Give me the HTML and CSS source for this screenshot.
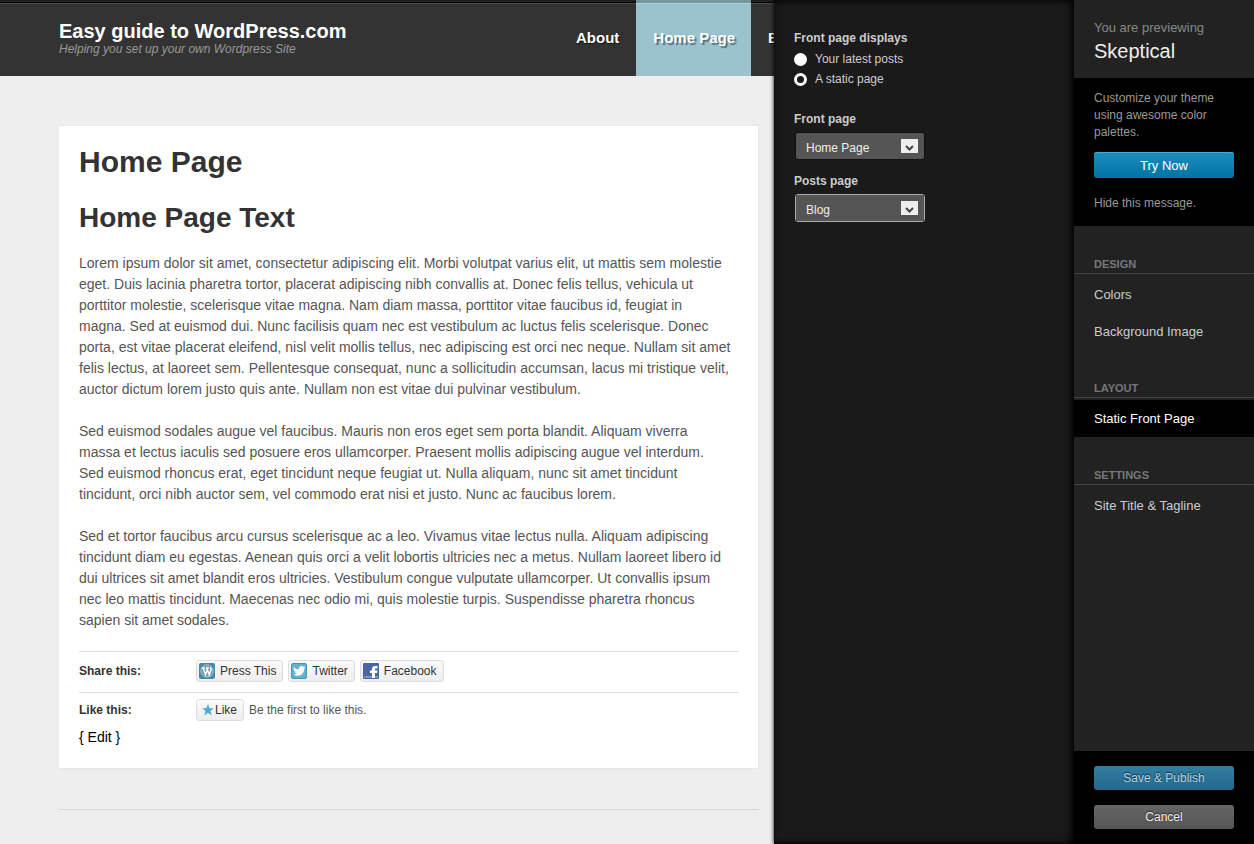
FILE: index.html
```html
<!DOCTYPE html>
<html lang="en">
<head>
<meta charset="utf-8">
<title>Customize Skeptical</title>
<link rel="stylesheet" href="styles.css">
</head>
<body>
<div class="customizer">
  <div class="preview">
    <header class="site-header">
      <div class="brand">
        <a class="site-title" href="#">Easy guide to WordPress.com</a>
        <p class="tagline">Helping you set up your own Wordpress Site</p>
      </div>
      <nav class="site-nav">
        <a href="#">About</a>
        <a href="#" class="current">Home Page</a>
        <a href="#">Blog</a>
      </nav>
    </header>
    <main class="content">
      <article class="post">
        <h1>Home Page</h1>
        <h2>Home Page Text</h2>
        <p>Lorem ipsum dolor sit amet, consectetur adipiscing elit. Morbi volutpat varius elit, ut mattis sem molestie eget. Duis lacinia pharetra tortor, placerat adipiscing nibh convallis at. Donec felis tellus, vehicula ut porttitor molestie, scelerisque vitae magna. Nam diam massa, porttitor vitae faucibus id, feugiat in<br> magna. Sed at euismod dui. Nunc facilisis quam nec est vestibulum ac luctus felis scelerisque. Donec<br> porta, est vitae placerat eleifend, nisl velit mollis tellus, nec adipiscing est orci nec neque. Nullam sit amet felis lectus, at laoreet sem. Pellentesque consequat, nunc a sollicitudin accumsan, lacus mi tristique velit, auctor dictum lorem justo quis ante. Nullam non est vitae dui pulvinar vestibulum.</p>
        <p>Sed euismod sodales augue vel faucibus. Mauris non eros eget sem porta blandit. Aliquam viverra<br> massa et lectus iaculis sed posuere eros ullamcorper. Praesent mollis adipiscing augue vel interdum.<br> Sed euismod rhoncus erat, eget tincidunt neque feugiat ut. Nulla aliquam, nunc sit amet tincidunt<br> tincidunt, orci nibh auctor sem, vel commodo erat nisi et justo. Nunc ac faucibus lorem.</p>
        <p>Sed et tortor faucibus arcu cursus scelerisque ac a leo. Vivamus vitae lectus nulla. Aliquam adipiscing tincidunt diam eu egestas. Aenean quis orci a velit lobortis ultricies nec a metus. Nullam laoreet libero id<br> dui ultrices sit amet blandit eros ultricies. Vestibulum congue vulputate ullamcorper. Ut convallis ipsum<br> nec leo mattis tincidunt. Maecenas nec odio mi, quis molestie turpis. Suspendisse pharetra rhoncus<br> sapien sit amet sodales.</p>
        <section class="social">
          <h3>Share this:</h3>
          <a class="chip" href="#">
            <svg width="16" height="16" viewBox="0 0 16 16" aria-hidden="true"><rect width="16" height="16" rx="2" fill="#4a87a3"/><circle cx="8" cy="8" r="6.200" fill="#6b9fb7" stroke="#b9d3df" stroke-width=".8"/><path d="M2.800 5h3M6.800 5h3.200M4.200 5l2.300 6.800L8.300 6.500M7.800 5l2.400 6.800 2-5.600-.9-1.800" fill="none" stroke="#fff" stroke-width="1.400"/></svg>
            Press This</a>
          <a class="chip" href="#">
            <svg width="16" height="16" viewBox="0 0 16 16" aria-hidden="true"><rect x=".5" y=".5" width="15" height="15" rx="1.500" fill="#62b3d0" stroke="#4694b2"/><path d="M2.500 4c1.500 1.700 3.200 2.300 5.400 2.300C7.700 4.200 9 3 10.500 3c.9 0 1.500.3 2 .8l1.500-.6-.8 1.500 1.200-.2-1.200 1.300c0 4.200-2.800 7-6.400 7-1.700 0-3.100-.4-4.300-1.200 1.500 0 2.600-.3 3.500-1.100-1.200-.2-2-.8-2.400-1.800h1.100C3.400 8.200 2.700 7.300 2.700 6l1.100.3C2.600 5.500 2.200 4.800 2.500 4z" fill="#fff"/></svg>
            Twitter</a>
          <a class="chip" href="#">
            <svg width="16" height="16" viewBox="0 0 16 16" aria-hidden="true"><rect width="16" height="16" rx="1" fill="#4b66a5"/><path d="M1 13h14v2H1z" fill="#8093c1"/><path d="M9 15v-5H7V7.500h2V6c0-2 1.200-3 3-3h2.500v2.500H13c-.8 0-1 .3-1 1v1h2.500L14.100 10H12v5z" fill="#fff"/></svg>
            Facebook</a>
        </section>
        <section class="social">
          <h3>Like this:</h3>
          <a class="chip like" href="#">
            <svg width="12" height="12" viewBox="0 0 12 12" aria-hidden="true"><path d="M6 0l1.500 4.200H12L8.400 6.900 9.800 11.500 6 8.800l-3.800 2.700 1.400-4.600L0 4.200h4.500z" fill="#4fa9d3"/></svg>
            Like</a>
          <span class="like-note">Be the first to like this.</span>
        </section>
        <a class="edit" href="#">{ Edit }</a>
      </article>
      <hr class="divider">
    </main>
  </div>

  <form class="panel">
    <fieldset class="choices">
      <legend>Front page displays</legend>
      <label><input type="radio" name="front"> Your latest posts</label>
      <label><input type="radio" name="front" checked> A static page</label>
    </fieldset>
    <label class="field-label" for="front-page">Front page</label>
    <div class="select-box">
      <select id="front-page"><option>Home Page</option></select>
      <svg class="arrow" width="17" height="14" viewBox="0 0 17 14" aria-hidden="true"><path fill="#eee" d="M0 0h17v14H0z"/><path d="M5 7l3.500 3.500L12 7" fill="none" stroke="#444" stroke-width="2"/></svg>
    </div>
    <label class="field-label" for="posts-page">Posts page</label>
    <div class="select-box focused">
      <select id="posts-page"><option>Blog</option></select>
      <svg class="arrow" width="17" height="14" viewBox="0 0 17 14" aria-hidden="true"><path fill="#eee" d="M0 0h17v14H0z"/><path d="M5 7l3.500 3.500L12 7" fill="none" stroke="#444" stroke-width="2"/></svg>
    </div>
  </form>

  <aside class="sidebar">
    <header class="theme">
      <p>You are previewing</p>
      <h2>Skeptical</h2>
    </header>
    <section class="notice">
      <p>Customize your theme using awesome color palettes.</p>
      <button class="btn primary" type="button">Try Now</button>
      <a href="#">Hide this message.</a>
    </section>
    <nav class="menu">
      <h3>Design</h3>
      <a href="#">Colors</a>
      <a href="#">Background Image</a>
      <h3>Layout</h3>
      <a href="#" class="active">Static Front Page</a>
      <h3>Settings</h3>
      <a href="#">Site Title &amp; Tagline</a>
    </nav>
    <footer class="actions">
      <button class="btn save" type="button">Save &amp; Publish</button>
      <button class="btn cancel" type="button">Cancel</button>
    </footer>
  </aside>
</div>
</body>
</html>
```
FILE: styles.css
```css
* { box-sizing: border-box; }
body {
  margin: 0;
  font-family: "Liberation Sans", Arial, sans-serif;
  font-size: 12px;
  line-height: 17px;
  background: #eee;
}
h1, h2, h3, p { margin: 0; }
a { color: inherit; text-decoration: none; }
.customizer { display: flex; min-height: 100vh; }

/* Site preview */
.preview { flex: 1; min-width: 0; overflow: hidden; background: #eee; }
.site-header {
  display: flex;
  height: 76px;
  padding-left: 59px;
  background: linear-gradient(#1f1f1f 2px, #000 2px, #000 3px, #4a4a4a 3px, #4a4a4a 4px, #333 4px);
}
.brand { flex: 0 0 500px; padding-top: 20px; }
.site-title { display: block; font-size: 20px; font-weight: bold; line-height: 22px; color: #fff; }
.tagline { font-size: 12px; line-height: 14px; font-style: italic; color: #999; }
.site-nav { display: flex; }
.site-nav a {
  padding: 0 17px;
  font-size: 15px;
  font-weight: bold;
  line-height: 76px;
  color: #fff;
  white-space: nowrap;
  text-shadow: 1px 1px 1px #111;
}
.site-nav .current {
  padding: 0 16px 0 17px;
  background: linear-gradient(#78969e 3px, #a8ced8 3px, #a8ced8 4px, #9bc3ce 4px);
  text-shadow: 2px 2px 1px #55707a;
}
.content { padding: 50px 15px 0 59px; }
.post {
  margin-right: 1px;
  padding: 20px;
  background: #fff;
  box-shadow: 0 0 0 1px #e8e8e8, 0 1px 1px #ccc;
}
.post h1 { font-size: 30px; line-height: 32px; color: #333; }
.post h2 { margin-top: 24px; font-size: 28px; line-height: 32px; color: #333; }
.post p { margin-top: 21px; font-size: 14px; line-height: 21px; color: #555; }
.post h2 + p { margin-top: 19px; }
.social {
  display: flex;
  align-items: center;
  gap: 5px;
  padding: 8px 0 10px;
  border-top: 1px solid #ddd;
}
.post p + .social { margin-top: 20px; }
.social + .social { padding: 6px 0; }
.social h3 { width: 112px; font-size: 12px; color: #333; }
.chip {
  display: flex;
  align-items: center;
  gap: 5px;
  height: 22px;
  padding: 0 6px 0 2px;
  border: 1px solid #ddd;
  border-radius: 3px;
  background: linear-gradient(#fafafa, #eee);
  color: #333;
}
.like { gap: 1px; padding: 0 6px 0 5px; }
.like-note { color: #555; }
.edit { display: block; font-size: 14px; line-height: 21px; color: #000; }
.divider { margin: 41px 0 0; border: 0; border-top: 1px solid #d5d5d5; }

/* Settings panel */
.panel {
  position: relative;
  flex: 0 0 300px;
  padding: 30px 20px;
  background: #1a1a1a;
  color: #ccc;
  box-shadow: 0 0 4px #000, inset 0 4px 8px -4px #000, inset -6px 0 8px -4px #000, inset 0 -4px 6px -4px #000;
}
.choices { display: grid; margin: 0 0 22px; padding: 0; border: 0; }
.choices legend { margin-bottom: 2px; padding: 0; font-weight: bold; }
.choices label { display: flex; align-items: center; gap: 8px; height: 20px; }
.choices input {
  appearance: none;
  width: 13px;
  height: 13px;
  margin: 0;
  border-radius: 50%;
  background: #fff;
}
.choices input:checked { border: 3px solid #fff; background: #1a1a1a; }
.field-label { display: block; font-weight: bold; }
.select-box {
  position: relative;
  width: 130px;
  margin: 4px 0 13px 1px;
  border: 1px solid #111;
  border-radius: 3px;
}
.focused { border-color: #aaa; }
.select-box select {
  display: block;
  appearance: none;
  width: 100%;
  height: 26px;
  padding: 4px 10px 0;
  border: 0;
  border-radius: 2px;
  outline: 0;
  background: #555;
  color: #eee;
  font: 12px "Liberation Sans", Arial, sans-serif;
}
.arrow { position: absolute; top: 6px; right: 6px; pointer-events: none; }

/* Sidebar */
.sidebar {
  position: relative;
  display: flex;
  flex-direction: column;
  flex: 0 0 180px;
  background: #222;
}
.theme { padding: 19px 20px 13px; color: #888; }
.theme p { font-size: 13px; line-height: 18px; }
.theme h2 { font-size: 20px; font-weight: normal; line-height: 28px; color: #eee; }
.notice { padding: 12px 20px 14px; background: #000; color: #999; }
.notice a { display: block; margin-top: 17px; }
.btn {
  display: block;
  width: 100%;
  height: 24px;
  padding: 0;
  border: 0;
  border-radius: 3px;
  font: 12px "Liberation Sans", Arial, sans-serif;
}
.primary {
  height: 26px;
  margin-top: 11px;
  background: linear-gradient(#1e8cbe, #0074a2);
  box-shadow: inset 0 1px #4aa9d2;
  color: #fff;
  font-size: 13px;
}
.menu { flex: 1; }
.menu h3 {
  margin: 30px 0 2px;
  padding: 0 20px;
  border-bottom: 1px solid #444;
  font-size: 11px;
  line-height: 17px;
  text-transform: uppercase;
  color: #777;
}
.menu a { display: block; padding: 0 20px; font-size: 13px; line-height: 37px; color: #ccc; }
.menu .active { background: #000; color: #fff; }
.actions { display: grid; gap: 15px; padding: 15px 20px; background: #000; }
.save { background: linear-gradient(#307fa2, #23698b); color: #b5d6e6; text-shadow: 0 -1px 1px #123; }
.cancel { background: linear-gradient(#666, #555); color: #eee; text-shadow: 0 -1px 1px #222; }
```
